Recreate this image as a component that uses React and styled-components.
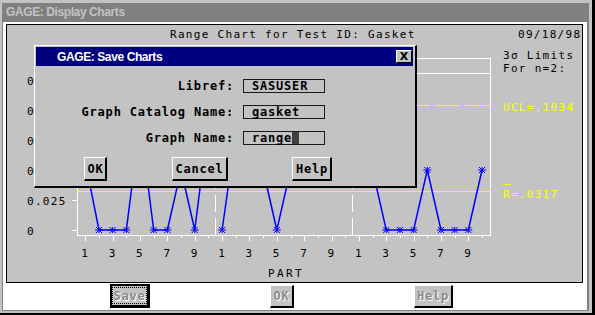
import styled, { createGlobalStyle } from "styled-components";

const GlobalStyle = createGlobalStyle`
  html, body {
    margin: 0;
    padding: 0;
    background: #c3c3c3;
  }
  body {
    font-family: "Liberation Sans", Arial, sans-serif;
  }
`;

const ZERO_Y = 230;
const PX_PER_UNIT = 1200;
const X0 = 85.3;
const STEP = 13.68;

const groups = [
  [0.057, 0, 0, 0, 0.09, 0, 0, 0.05, 0, 0.09],
  [0, 0.08, 0.1, 0.05, 0, 0.05, 0.075, 0.05, 0.1, 0.075],
  [0.075, 0.05, 0, 0, 0, 0.05, 0, 0, 0, 0.05],
];

const xAt = (i) => X0 + STEP * i;
const yAt = (v) => ZERO_Y - v * PX_PER_UNIT;

const yTicks = ["0.125", "0.100", "0.075", "0.050", "0.025", "0"];

const Star = ({ x, y }) => (
  <path
    d={`M${x - 4} ${y}H${x + 4}M${x - 3} ${y - 3}L${x + 3} ${y + 3}M${x - 3} ${y + 3}L${x + 3} ${y - 3}M${x} ${y - 3}V${y + 3}`}
    stroke="#0000ff"
    strokeWidth="1"
  />
);

const RangeChart = () => (
  <ChartSvg width="575" height="257" viewBox="7 25 575 257">
    <text x="170" y="38">Range Chart for Test ID: Gasket</text>
    <text x="518" y="38">09/18/98</text>
    <text x="503" y="59">3σ Limits</text>
    <text x="503" y="72">For n=2:</text>
    <text x="503" y="111" fill="#ffff00">UCL=.1034</text>
    <line x1="503" y1="184.5" x2="511" y2="184.5" stroke="#ffff00" />
    <text x="503" y="198" fill="#ffff00">R=.0317</text>

    {/* frame */}
    <g stroke="#ffffff" strokeWidth="1" fill="none">
      <line x1="77.5" y1="58.5" x2="490.5" y2="58.5" />
      <line x1="77.5" y1="73.5" x2="490.5" y2="73.5" />
      <line x1="77.5" y1="58" x2="77.5" y2="235.5" />
      <line x1="490.5" y1="58" x2="490.5" y2="235.5" />
      <line x1="77" y1="235.5" x2="491" y2="235.5" />
      <line x1="215.5" y1="235" x2="215.5" y2="58" strokeDasharray="17 6" />
      <line x1="352.5" y1="235" x2="352.5" y2="58" strokeDasharray="17 6" />
      {yTicks.map((t, k) => (
        <line key={t} x1="72" y1={80.5 + k * 30} x2="77" y2={80.5 + k * 30} />
      ))}
      {Array.from({ length: 30 }, (_, i) => (
        <line
          key={i}
          x1={Math.round(xAt(i)) + 0.5}
          y1="235"
          x2={Math.round(xAt(i)) + 0.5}
          y2={i % 2 === 0 ? 241 : 238}
        />
      ))}
    </g>

    {yTicks.map((t, k) => (
      <text key={t} x="27" y={85 + k * 30}>
        {t}
      </text>
    ))}

    {Array.from({ length: 15 }, (_, k) => (
      <text key={k} x={xAt(k * 2)} y="257" textAnchor="middle">
        {[1, 3, 5, 7, 9][k % 5]}
      </text>
    ))}
    <PartLabel x="268" y="277">PART</PartLabel>

    {/* limits */}
    <line x1="490" y1="105.5" x2="77" y2="105.5" stroke="#ffff00" strokeDasharray="25 5" />
    <line x1="77" y1="191.5" x2="490" y2="191.5" stroke="#ffff00" />

    {groups.map((g, gi) => (
      <g key={gi}>
        <polyline
          points={g.map((v, j) => `${xAt(gi * 10 + j)},${yAt(v)}`).join(" ")}
          fill="none"
          stroke="#0000ff"
          strokeWidth="1.5"
        />
        {g.map((v, j) => (
          <Star key={j} x={xAt(gi * 10 + j)} y={yAt(v)} />
        ))}
      </g>
    ))}
  </ChartSvg>
);

const App = () => (
  <>
    <GlobalStyle />
    <Frame>
      <Window>
        <TitleBar>GAGE: Display Charts</TitleBar>
        <Body>
          <ChartPanel>
            <RangeChart />
            <Dialog>
              <DialogTitle>
                <span>GAGE: Save Charts</span>
                <CloseButton>X</CloseButton>
              </DialogTitle>
              <Form>
                <FieldLabel>Libref:</FieldLabel>
                <Field>SASUSER</Field>
                <FieldLabel>Graph Catalog Name:</FieldLabel>
                <Field>gasket</Field>
                <FieldLabel>Graph Name:</FieldLabel>
                <Field>
                  range
                  <Cursor />
                </Field>
              </Form>
              <DialogButtons>
                <DialogButton>OK</DialogButton>
                <DialogButton>Cancel</DialogButton>
                <DialogButton>Help</DialogButton>
              </DialogButtons>
            </Dialog>
          </ChartPanel>
          <BottomBar>
            <PushButton $default>
              <span>Save</span>
            </PushButton>
            <PushButton>OK</PushButton>
            <PushButton>Help</PushButton>
          </BottomBar>
        </Body>
      </Window>
    </Frame>
  </>
);

export default App;

const Frame = styled.div`
  box-sizing: border-box;
  width: 595px;
  height: 315px;
  padding: 3px 3px 2px 2px;
  background: #c3c3c3;
  border-right: 3px solid #000;
  border-bottom: 2px solid #000;
  display: flex;
`;

const Window = styled.div`
  flex: 1;
  display: flex;
  flex-direction: column;
  border-left: 1px solid #808080;
  border-right: 2px solid #808080;
  border-bottom: 1px solid #808080;
`;

const TitleBar = styled.div`
  height: 19px;
  background: #808080;
  color: #c3c3c3;
  font-weight: bold;
  font-size: 12px;
  letter-spacing: -0.4px;
  line-height: 19px;
  padding-left: 3px;
`;

const Body = styled.div`
  flex: 1;
  background: #ffffff;
  padding: 2px 4px 0 3px;
  display: flex;
  flex-direction: column;
`;

const ChartPanel = styled.div`
  position: relative;
  box-sizing: border-box;
  width: 577px;
  height: 259px;
  border: 1px solid #000;
  background: #c3c3c3;
`;

const ChartSvg = styled.svg`
  display: block;

  text {
    font-family: "DejaVu Sans Mono", monospace;
    font-size: 11px;
    letter-spacing: 1.3px;
    fill: #000;
  }
  text[fill="#ffff00"] {
    fill: #ffff00;
  }
`;

const PartLabel = styled.text`
  letter-spacing: 2.4px !important;
`;

const Dialog = styled.div`
  position: absolute;
  left: 27px;
  top: 20px;
  box-sizing: border-box;
  width: 383px;
  height: 143px;
  background: #c3c3c3;
  border-top: 1px solid #fff;
  border-left: 1px solid #fff;
  border-right: 2px solid #000;
  border-bottom: 2px solid #000;
  padding: 1px 2px 1px 1px;
`;

const DialogTitle = styled.div`
  height: 19px;
  background: #000080;
  color: #fff;
  display: flex;
  align-items: center;
  justify-content: space-between;
  padding-left: 21px;
  padding-right: 1px;
  font-weight: bold;
  font-size: 12px;
  letter-spacing: -0.4px;
`;

const CloseButton = styled.div`
  box-sizing: border-box;
  width: 16px;
  height: 13px;
  background: #c3c3c3;
  color: #000;
  border-top: 1px solid #fff;
  border-left: 1px solid #fff;
  border-right: 1px solid #000;
  border-bottom: 1px solid #000;
  font-family: "DejaVu Sans", sans-serif;
  font-size: 11px;
  font-weight: bold;
  line-height: 11px;
  letter-spacing: 0;
  text-align: center;
`;

const monoBold = `
  font-family: "DejaVu Sans Mono", monospace;
  font-weight: bold;
  font-size: 12px;
  letter-spacing: 0.8px;
`;

const Form = styled.div`
  display: grid;
  grid-template-columns: 198px 82px;
  column-gap: 9px;
  row-gap: 12px;
  margin-top: 13px;
`;

const FieldLabel = styled.div`
  ${monoBold}
  text-align: right;
  align-self: center;
  color: #000;
`;

const Field = styled.div`
  ${monoBold}
  box-sizing: border-box;
  height: 14px;
  border: 1px solid #1a1a1a;
  padding-left: 8px;
  line-height: 12px;
  color: #000;
  display: flex;
  align-items: stretch;
`;

const Cursor = styled.span`
  width: 7px;
  background: #404040;
`;

const DialogButtons = styled.div`
  display: grid;
  grid-template-columns: 23px 56px 40px;
  column-gap: 64.5px;
  padding-left: 48px;
  margin-top: 12px;
`;

const DialogButton = styled.div`
  ${monoBold}
  box-sizing: border-box;
  height: 24px;
  border-top: 1px solid #fff;
  border-left: 1px solid #fff;
  border-right: 2px solid #000;
  border-bottom: 2px solid #000;
  display: flex;
  align-items: center;
  justify-content: center;
  color: #000;
  padding-left: 1px;
`;

const BottomBar = styled.div`
  display: grid;
  grid-template-columns: 40px 24px 39px;
  column-gap: 120px;
  padding-left: 104px;
  margin-top: 1px;
  align-items: start;
`;

const PushButton = styled.div`
  ${monoBold}
  box-sizing: border-box;
  height: ${({ $default }) => ($default ? "24px" : "23px")};
  margin-top: ${({ $default }) => ($default ? "0" : "1px")};
  background: #c3c3c3;
  color: #8a8a8a;
  text-shadow: 1px 1px 0 #fff;
  display: flex;
  align-items: center;
  justify-content: center;
  border-top: ${({ $default }) => ($default ? "2px solid #000" : "1px solid #fff")};
  border-left: ${({ $default }) => ($default ? "2px solid #000" : "1px solid #fff")};
  border-right: ${({ $default }) => ($default ? "3px solid #000" : "2px solid #000")};
  border-bottom: ${({ $default }) => ($default ? "3px solid #000" : "2px solid #000")};

  span {
    box-sizing: border-box;
    align-self: stretch;
    flex: 1;
    margin: 1px;
    border: 1px dotted #000;
    display: flex;
    align-items: center;
    justify-content: center;
  }
`;
